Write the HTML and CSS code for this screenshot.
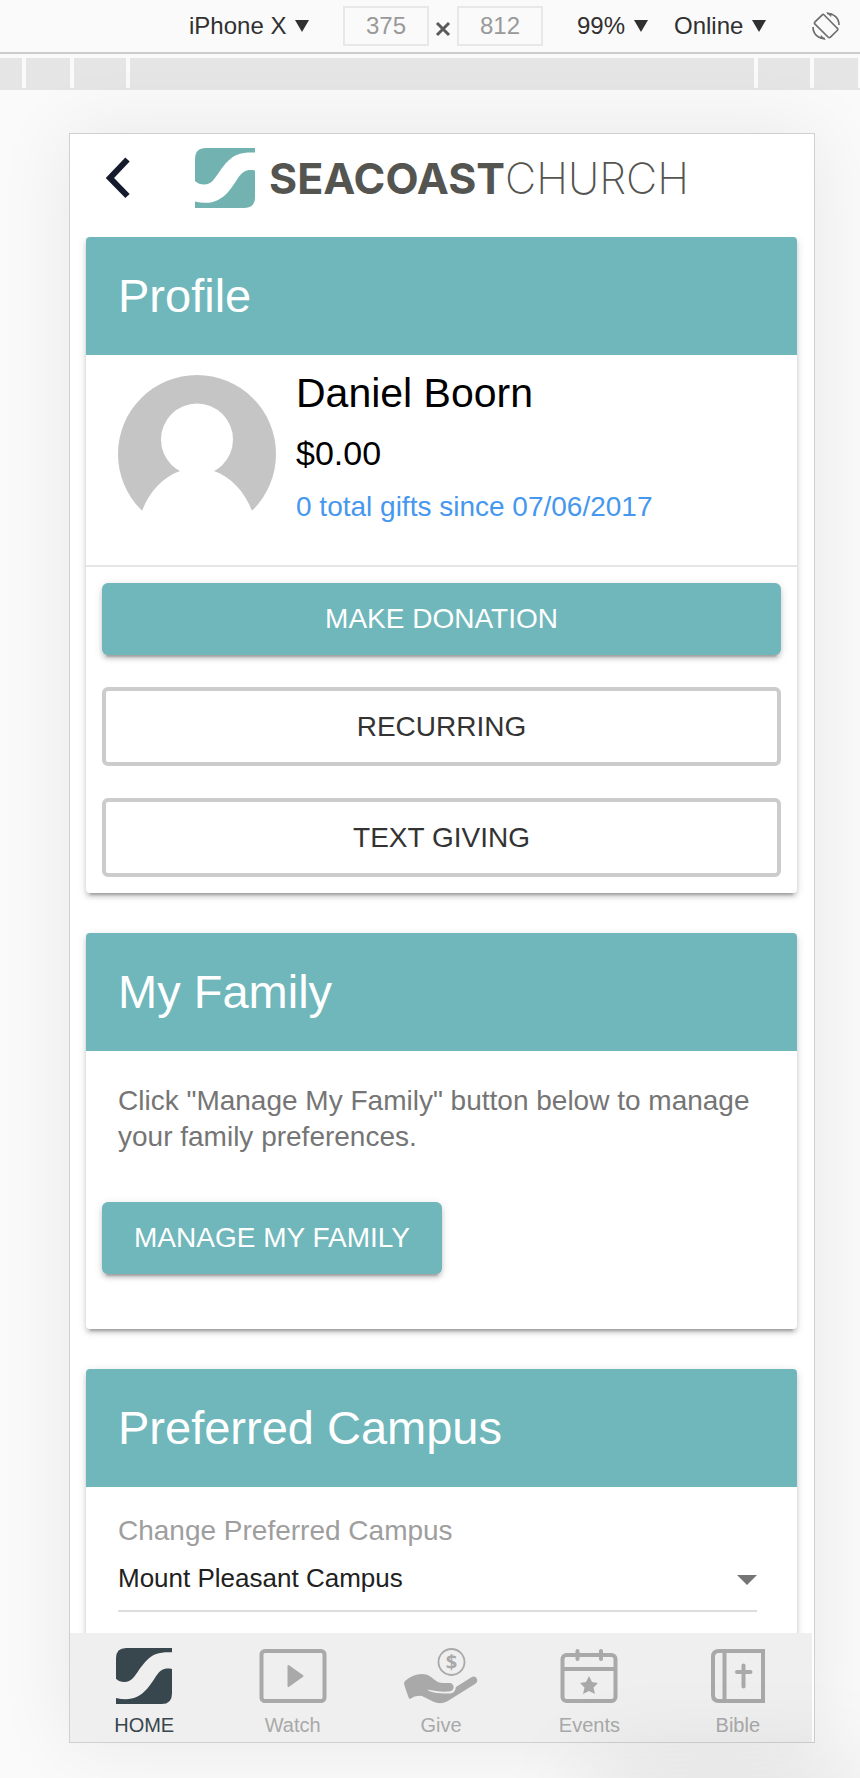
FILE: index.html
```
<!DOCTYPE html>
<html lang="en">
<head>
    <meta charset="UTF-8">
    <meta name="viewport" content="width=device-width, initial-scale=1.0">
    <title>Seacoast Church - Profile</title>
    <link rel="stylesheet" href="styles.css">
</head>
<body>
    <div class="toolbar">
        <select class="picker" aria-label="Device">
            <option>iPhone X</option>
        </select>
        <div class="dimensions">
            <input type="text" value="375" aria-label="Width">
            <svg class="times" width="28" height="40" viewBox="0 0 28 40"><path d="M8 17l12 12M20 17L8 29" stroke="#5a5a5a" stroke-width="3"/></svg>
            <input type="text" value="812" aria-label="Height">
        </div>
        <select class="picker picker-zoom" aria-label="Zoom">
            <option>99%</option>
        </select>
        <select class="picker picker-network" aria-label="Throttling">
            <option>Online</option>
        </select>
        <button class="rotate" aria-label="Rotate">
            <svg width="28" height="28" viewBox="0 0 28 28" fill="none" stroke="#6e6e6e" stroke-width="1.700">
                <path d="M10 3.2Q11 1.8 12.2 3L25 16Q26.400 17.200 25.200 18.500L18.500 25.200Q17.200 26.200 16 25L3 12.200Q1.800 11 3 9.800Z"/>
                <path d="M15 1.500C22 1.500 27 6 27 13M1 15C1 22 6 26.500 13 26.500"/>
                <path d="M14 0l6 1.500-1 3.500zM14 28l-6-1.500 1-3.500z" fill="#6e6e6e" stroke="none"/>
            </svg>
        </button>
    </div>

    <div class="ruler">
        <span class="seg-edge"></span>
        <span class="seg-small"></span>
        <span class="seg-medium"></span>
        <span class="seg-main"></span>
        <span class="seg-medium"></span>
        <span class="seg-small"></span>
    </div>

    <div class="device">
        <header class="app-header">
            <button class="back" aria-label="Back">
                <svg width="24" height="42" viewBox="0 0 24 42"><path d="M21.500 2.500L4 21l17.500 18" fill="none" stroke="#151b2d" stroke-width="6"/></svg>
            </button>
            <div class="logo">
                <svg width="60" height="60" viewBox="0 0 60 60" fill="#72b3b1">
                    <path d="M0 11Q0 0 11 0H60V4.500C47 4 40 6 33 13C26 20 23 27 18 32.500C14 37.500 5 38 0 33Z"/>
                    <path d="M60 22.500C52 21 48 23 43 30C36 41 31 48 23 52C16 55.500 8 55.500 0 53.500V60H49Q60 60 60 49Z"/>
                </svg>
                <span class="logo-text"><b>SEACOAST</b>CHURCH</span>
            </div>
        </header>

        <main class="content">
            <section class="card">
                <h2>Profile</h2>
                <div class="profile">
                    <svg width="158" height="158" viewBox="0 0 158 158">
                        <circle cx="79" cy="79" r="79" fill="#c5c5c5"/>
                        <circle cx="79" cy="64.500" r="36" fill="#fff"/>
                        <path fill="#fff" d="M62 96C45 102 31 117 24 136L10 158H148L134 136C127 117 113 102 96 96Z"/>
                    </svg>
                    <div class="profile-info">
                        <div class="name">Daniel Boorn</div>
                        <div class="amount">$0.00</div>
                        <a href="#" class="gifts">0 total gifts since 07/06/2017</a>
                    </div>
                </div>
                <div class="actions">
                    <button class="btn btn-primary">MAKE DONATION</button>
                    <button class="btn btn-outline">RECURRING</button>
                    <button class="btn btn-outline">TEXT GIVING</button>
                </div>
            </section>

            <section class="card">
                <h2>My Family</h2>
                <p class="card-text">Click "Manage My Family" button below to manage your family preferences.</p>
                <div class="family-actions">
                    <button class="btn btn-primary">MANAGE MY FAMILY</button>
                </div>
            </section>

            <section class="card">
                <h2>Preferred Campus</h2>
                <div class="campus">
                    <label for="campus">Change Preferred Campus</label>
                    <select id="campus">
                        <option>Mount Pleasant Campus</option>
                    </select>
                </div>
            </section>
        </main>

        <nav class="tabs">
            <a href="#" class="active">
                <svg width="56" height="56" viewBox="0 0 60 60" fill="currentColor">
                    <path d="M0 11Q0 0 11 0H60V4.500C47 4 40 6 33 13C26 20 23 27 18 32.500C14 37.500 5 38 0 33Z"/>
                    <path d="M60 22.500C52 21 48 23 43 30C36 41 31 48 23 52C16 55.500 8 55.500 0 53.500V60H49Q60 60 60 49Z"/>
                </svg>
                HOME
            </a>
            <a href="#">
                <svg width="68" height="56" viewBox="0 0 68 56">
                    <rect x="2.500" y="3" width="63" height="50" rx="3.500" fill="none" stroke="currentColor" stroke-width="4"/>
                    <path d="M29.500 18v20l14-10z" fill="currentColor" stroke="currentColor" stroke-width="2" stroke-linejoin="round"/>
                </svg>
                Watch
            </a>
            <a href="#">
                <svg width="74" height="56" viewBox="0 0 74 56">
                    <circle cx="47.500" cy="14" r="13" fill="none" stroke="currentColor" stroke-width="1.800"/>
                    <text x="47.500" y="21" text-anchor="middle" font-family="Open Sans, sans-serif" font-weight="700" font-size="20" fill="currentColor">$</text>
                    <path fill="currentColor" d="M1 33Q9 26 18 26C24 26 27 29 31 32Q34 35 39 35H46Q50 36 49.500 40Q49 43 45 43.500C37 44 31 43 23 41.500C27 45.500 38 45.500 46 45.500Q51 45 52 39L67 29.500Q71 27 73 31Q74 34 71 36L43 53.500Q36 57 29 53.500L18 48Q12 46.500 6 51Q5 51 4 48L0 36Q0 34 1 33Z"/>
                </svg>
                Give
            </a>
            <a href="#">
                <svg width="58" height="56" viewBox="0 0 58 56">
                    <g fill="none" stroke="currentColor" stroke-width="4">
                        <rect x="2.500" y="7" width="53" height="46" rx="4"/>
                        <path d="M3 21H55"/>
                        <path d="M17.500 3V11M41 3V11" stroke-linecap="round"/>
                    </g>
                    <path fill="currentColor" d="M29 28L32 34L38 35L33.500 39.500L35 46L29 43L23 46L24.500 39.500L20 35L26 34Z"/>
                </svg>
                Events
            </a>
            <a href="#">
                <svg width="56" height="56" viewBox="0 0 56 56" fill="none" stroke="currentColor" stroke-width="4">
                    <path d="M53 3H9Q3 3 3 9V47Q3 53 9 53H53Z"/>
                    <path d="M14.500 3V53"/>
                    <path d="M33.500 17.500V38.500M27 24H40.500" stroke-linecap="round"/>
                </svg>
                Bible
            </a>
        </nav>
    </div>
</body>
</html>
```

FILE: styles.css
```
* {
    box-sizing: border-box;
}
body {
    position: relative;
    display: flex;
    flex-direction: column;
    height: 100vh;
    margin: 0;
    overflow: hidden;
    font-family: "Liberation Sans", Arial, sans-serif;
    background-color: #fafafa;
}
/* soft shadow coming up from the bottom right corner */
body::after {
    content: "";
    position: absolute;
    top: 100%;
    left: 70%;
    right: 0;
    height: 80px;
    box-shadow: 0 0 100px 10px rgba(0,0,0,0.1);
    pointer-events: none;
}
button, select, input {
    font-family: inherit;
    margin: 0;
}
button {
    padding: 0;
    border: none;
    background: none;
    cursor: pointer;
}

/* toolbar */
.toolbar {
    display: flex;
    align-items: center;
    justify-content: flex-end;
    flex-shrink: 0;
    height: 54px;
    padding-right: 20px;
    border-bottom: 2px solid #ccc;
}
.picker {
    appearance: none;
    height: 40px;
    padding: 0 22px 2px 0;
    border: none;
    color: #303030;
    font-size: 24px;
    background: url("data:image/svg+xml,%3Csvg xmlns='http://www.w3.org/2000/svg' width='14' height='12'%3E%3Cpath d='M0 0h14l-7 12z' fill='%23303030'/%3E%3C/svg%3E") no-repeat right center;
}
.picker-zoom {
    margin-right: 26px;
}
.picker-network {
    margin-right: 46px;
}
.dimensions {
    display: flex;
    margin: 0 34px;
}
.dimensions input {
    width: 86px;
    height: 40px;
    padding: 0;
    border: 2px solid #e8e8e8;
    color: #999;
    font-size: 24px;
    text-align: center;
    background: none;
}
.rotate svg {
    display: block;
}

/* breakpoint ruler */
.ruler {
    display: flex;
    flex-shrink: 0;
    gap: 4px;
    height: 32px;
    margin-top: 4px;
    padding-right: 2px;
    border-bottom: 2px solid #e5e5e5;
}
.ruler span {
    background-color: #e5e5e5;
}
.seg-edge {
    width: 22px;
}
.seg-small {
    width: 44px;
}
.seg-medium {
    width: 52px;
}
.seg-main {
    flex: 1;
}

/* device */
.device {
    display: flex;
    flex-direction: column;
    flex: 1;
    min-height: 0;
    margin: 43px 45px 35px 69px;
    border: 1px solid #d0d0d0;
    background-color: #fff;
    box-shadow: 0 0 72px rgba(0,0,0,0.08);
}
.app-header {
    display: grid;
    grid-template-columns: 1fr auto 1fr;
    align-items: center;
    padding: 14px 0 29px;
}
.back {
    justify-self: start;
    margin-left: 36px;
}
.back svg {
    display: block;
}
.logo {
    display: flex;
    align-items: center;
    gap: 14px;
}
.logo-text {
    font-family: Inter, sans-serif;
    font-size: 43px;
    font-weight: 200;
    line-height: 60px;
    color: #545450;
}
.logo-text b {
    font-weight: 700;
}
.content {
    flex: 1;
    min-height: 0;
    padding: 0 17px 0 16px;
    overflow-y: auto;
    scrollbar-width: none;
}

/* cards */
.card {
    margin-bottom: 40px;
    border-radius: 4px;
    background-color: #fff;
    box-shadow: 0 6px 2px -4px rgba(0,0,0,0.2), 0 4px 4px rgba(0,0,0,0.14), 0 2px 10px rgba(0,0,0,0.12);
}
.card h2 {
    margin: 0;
    padding: 31px 32px;
    border-radius: 4px 4px 0 0;
    color: #fff;
    font-size: 47px;
    font-weight: normal;
    line-height: 56px;
    background-color: #6fb7bb;
}
.profile {
    display: flex;
    gap: 20px;
    padding: 20px 32px 32px;
    border-bottom: 2px solid #e5e5e5;
}
.profile-info {
    height: 158px;
    margin-top: -6px;
}
.name {
    font-size: 41px;
    line-height: 48px;
}
.amount {
    margin: 16px 0;
    font-size: 34px;
    line-height: 40px;
}
.gifts {
    display: block;
    color: #4698ee;
    font-size: 28px;
    line-height: 36px;
    text-decoration: none;
}
.actions {
    display: flex;
    flex-direction: column;
    gap: 32px;
    padding: 16px;
}
.btn {
    height: 72px;
    padding: 0 32px;
    border-radius: 6px;
    font-size: 28px;
}
.btn-primary {
    color: #fff;
    background-color: #6fb7bb;
    box-shadow: 0 6px 2px -4px rgba(0,0,0,0.2), 0 4px 4px rgba(0,0,0,0.14), 0 2px 10px rgba(0,0,0,0.12);
}
.btn-outline {
    height: 79px;
    border: 4px solid #ccc;
    color: #333;
}
.card-text {
    margin: 0;
    padding: 32px;
    color: #757575;
    font-size: 28px;
    line-height: 36px;
}
.family-actions {
    padding: 15px 16px 55px;
}
.campus {
    padding: 26px 40px 40px 32px;
}
.campus label {
    display: block;
    color: #9e9e9e;
    font-size: 28px;
    line-height: 36px;
}
.campus select {
    appearance: none;
    width: 100%;
    height: 63px;
    padding: 0 24px 4px 0;
    border: none;
    border-bottom: 2px solid #ddd;
    color: #212121;
    font-size: 26px;
    background: url("data:image/svg+xml,%3Csvg xmlns='http://www.w3.org/2000/svg' width='20' height='10'%3E%3Cpath d='M0 0h20l-10 10z' fill='%23757575'/%3E%3C/svg%3E") no-repeat right center;
}

/* bottom tabs */
.tabs {
    display: grid;
    grid-template-columns: repeat(5, 1fr);
    margin-right: 2px;
    padding: 15px 0 5px;
    background-color: #efefef;
}
.tabs a {
    display: flex;
    flex-direction: column;
    align-items: center;
    gap: 9px;
    color: #a9a9a9;
    font-size: 20px;
    line-height: 24px;
    text-decoration: none;
}
.tabs .active {
    color: #38464d;
}
```
